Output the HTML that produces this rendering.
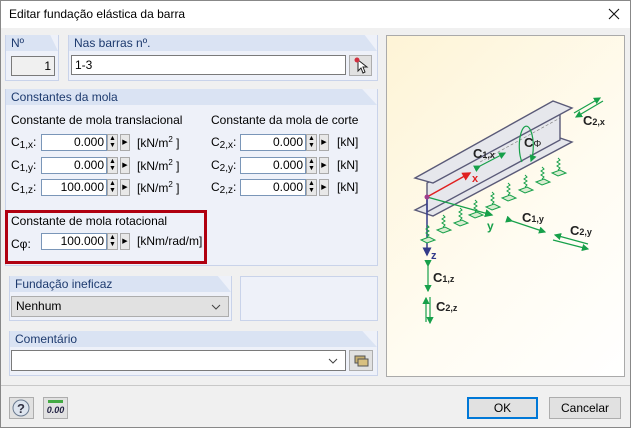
<!DOCTYPE html>
<html><head><meta charset="utf-8"><style>
*{box-sizing:border-box;margin:0;padding:0}
body{width:631px;height:428px;overflow:hidden;background:#f0f0f0;font-family:"Liberation Sans",sans-serif;font-size:12px;color:#000;position:relative}
.a{position:absolute}
.win{left:0;top:0;width:631px;height:428px;border:1px solid #888}
.title{left:1px;top:1px;width:629px;height:27px;background:#fff}
.panel{background:#eef1f9;border:1px solid #c9d3ea;border-top:none}
.hdr{background:#dae3f3;height:16px;color:#1d3a6e;padding-left:5px;line-height:16px;font-size:12px}
.inp{background:#fff;border:1px solid #7a7a7a;height:20px;line-height:18px;text-align:right;padding-right:3px}
.num{border:1px solid #7a96b8;background:#fff;height:17px;line-height:15px;text-align:right;padding-right:2px}
.spin{width:11px;height:17px;border:1px solid #aaa;background:#e8e8e8}
.btn{background:#e1e1e1;border:1px solid #adadad;text-align:center}
sub{font-size:10px;vertical-align:-2px}
sup{font-size:8px}
</style></head><body>
<div class="a win"></div>
<div class="a title"></div>
<div class="a" style="left:9px;top:7px;font-size:12px">Editar fundação elástica da barra</div>
<svg class="a" style="left:608px;top:8px" width="12" height="12"><path d="M1,1 L11,11 M11,1 L1,11" stroke="#111" stroke-width="1.1"/></svg>

<div class="a panel" style="left:5px;top:35px;width:54px;height:46px"><div class="hdr" style="clip-path:polygon(0 0,85% 0,100% 100%,0 100%)">Nº</div></div>
<div class="a inp" style="left:11px;top:56px;width:44px;background:#f0f0f0">1</div>
<div class="a panel" style="left:68px;top:35px;width:310px;height:46px"><div class="hdr" style="clip-path:polygon(0 0,96% 0,100% 100%,0 100%)">Nas barras nº.</div></div>
<div class="a inp" style="left:71px;top:55px;width:275px;text-align:left;padding-left:3px">1-3</div>
<div class="a btn" style="left:349px;top:55px;width:23px;height:21px"><svg width="21" height="19"><path d="M8,4 L8,15 L11,12 L13,17 L15,16 L13,11 L17,11 Z" fill="#fff" stroke="#222"/><circle cx="7" cy="4" r="2.5" fill="#d03040"/></svg></div>

<div class="a panel" style="left:5px;top:89px;width:373px;height:177px"><div class="hdr" style="clip-path:polygon(0 0,96% 0,100% 100%,0 100%)">Constantes da mola</div></div>
<div class="a" style="left:11px;top:113px">Constante de mola translacional</div>
<div class="a" style="left:211px;top:113px">Constante da mola de corte</div>

<div class="a" style="left:11px;top:135px">C<sub>1,x</sub>:</div>
<div class="a num" style="left:41px;top:134px;width:66px">0.000</div>
<div class="a spin" style="left:107px;top:134px;font-size:7px;line-height:7px;text-align:center">▲<br>▼</div>
<div class="a spin" style="left:120px;top:134px;width:10px;font-size:7px;line-height:15px;text-align:center">▶</div>
<div class="a" style="left:137px;top:135px">[kN/m<sup>2</sup> ]</div>
<div class="a" style="left:11px;top:158px">C<sub>1,y</sub>:</div>
<div class="a num" style="left:41px;top:157px;width:66px">0.000</div>
<div class="a spin" style="left:107px;top:157px;font-size:7px;line-height:7px;text-align:center">▲<br>▼</div>
<div class="a spin" style="left:120px;top:157px;width:10px;font-size:7px;line-height:15px;text-align:center">▶</div>
<div class="a" style="left:137px;top:158px">[kN/m<sup>2</sup> ]</div>
<div class="a" style="left:11px;top:180px">C<sub>1,z</sub>:</div>
<div class="a num" style="left:41px;top:179px;width:66px">100.000</div>
<div class="a spin" style="left:107px;top:179px;font-size:7px;line-height:7px;text-align:center">▲<br>▼</div>
<div class="a spin" style="left:120px;top:179px;width:10px;font-size:7px;line-height:15px;text-align:center">▶</div>
<div class="a" style="left:137px;top:180px">[kN/m<sup>2</sup> ]</div>

<div class="a" style="left:211px;top:135px">C<sub>2,x</sub>:</div>
<div class="a num" style="left:240px;top:134px;width:66px">0.000</div>
<div class="a spin" style="left:306px;top:134px;font-size:7px;line-height:7px;text-align:center">▲<br>▼</div>
<div class="a spin" style="left:319px;top:134px;width:10px;font-size:7px;line-height:15px;text-align:center">▶</div>
<div class="a" style="left:337px;top:135px">[kN]</div>
<div class="a" style="left:211px;top:158px">C<sub>2,y</sub>:</div>
<div class="a num" style="left:240px;top:157px;width:66px">0.000</div>
<div class="a spin" style="left:306px;top:157px;font-size:7px;line-height:7px;text-align:center">▲<br>▼</div>
<div class="a spin" style="left:319px;top:157px;width:10px;font-size:7px;line-height:15px;text-align:center">▶</div>
<div class="a" style="left:337px;top:158px">[kN]</div>
<div class="a" style="left:211px;top:180px">C<sub>2,z</sub>:</div>
<div class="a num" style="left:240px;top:179px;width:66px">0.000</div>
<div class="a spin" style="left:306px;top:179px;font-size:7px;line-height:7px;text-align:center">▲<br>▼</div>
<div class="a spin" style="left:319px;top:179px;width:10px;font-size:7px;line-height:15px;text-align:center">▶</div>
<div class="a" style="left:337px;top:180px">[kN]</div>

<div class="a" style="left:5px;top:210px;width:202px;height:54px;border:3px solid #b00010;background:#eef1f9"></div>
<div class="a" style="left:11px;top:214px">Constante de mola rotacional</div>
<div class="a" style="left:11px;top:237px">Cφ:</div>
<div class="a num" style="left:41px;top:233px;width:66px">100.000</div>
<div class="a spin" style="left:107px;top:233px;font-size:7px;line-height:7px;text-align:center">▲<br>▼</div>
<div class="a spin" style="left:120px;top:233px;width:10px;font-size:7px;line-height:15px;text-align:center">▶</div>
<div class="a" style="left:137px;top:234px">[kNm/rad/m]</div>

<div class="a panel" style="left:9px;top:276px;width:223px;height:45px"><div class="hdr" style="clip-path:polygon(0 0,94% 0,100% 100%,0 100%)">Fundação ineficaz</div></div>
<div class="a" style="left:11px;top:296px;width:218px;height:21px;border:1px solid #adadad;background:#e1e1e1;padding-left:4px;line-height:19px">Nenhum<svg style="position:absolute;right:7px;top:7px" width="10" height="6"><path d="M1,1 L5,5 L9,1" stroke="#444" fill="none"/></svg></div>
<div class="a" style="left:240px;top:276px;width:138px;height:45px;border:1px solid #c9d3ea;background:#eef1f9"></div>

<div class="a panel" style="left:9px;top:331px;width:369px;height:45px"><div class="hdr" style="clip-path:polygon(0 0,96% 0,100% 100%,0 100%)">Comentário</div></div>
<div class="a" style="left:11px;top:350px;width:335px;height:21px;border:1px solid #7a7a7a;background:#fff"><svg style="position:absolute;right:7px;top:7px" width="10" height="6"><path d="M1,1 L5,5 L9,1" stroke="#444" fill="none"/></svg></div>
<div class="a btn" style="left:349px;top:350px;width:24px;height:21px"><svg width="22" height="19"><rect x="5" y="5" width="10" height="7" fill="#c8b070" stroke="#555"/><rect x="8" y="8" width="10" height="7" fill="#d8c080" stroke="#555"/></svg></div>

<div class="a" style="left:386px;top:35px;width:239px;height:342px;border:1px solid #aaa;background:linear-gradient(135deg,#fef4d6,#fffcf2 60%,#fff)">
<svg width="239" height="342" viewBox="386 35 239 342" style="position:absolute;left:-1px;top:-1px">
<defs><marker id="g" markerWidth="6" markerHeight="6" refX="5" refY="3" orient="auto"><path d="M0,0 L6,3 L0,6 Z" fill="#17a04a"/></marker>
<marker id="r" markerWidth="6" markerHeight="6" refX="5" refY="3" orient="auto"><path d="M0,0 L6,3 L0,6 Z" fill="#e02020"/></marker>
<marker id="b" markerWidth="6" markerHeight="6" refX="5" refY="3" orient="auto"><path d="M0,0 L6,3 L0,6 Z" fill="#333a8a"/></marker></defs>
<g stroke="#5a5a78" stroke-width="1.4" fill="#e6e7ec">
<polygon points="415,210 557,137 572,142 433,216"/>
<polygon points="427,183 427,212 560,140 560,112"/>
<polygon points="415,178 553,101 572,108 433,183"/>
</g>
<line x1="480" y1="162" x2="560" y2="118" stroke="#777" stroke-width="0.6" stroke-dasharray="3,2"/>
<line x1="427" y1="197" x2="470" y2="173" stroke="#e02020" stroke-width="1.5" marker-end="url(#r)"/>
<text x="472" y="182" fill="#e02020" font-size="11" font-weight="bold">x</text>
<line x1="427" y1="197" x2="492" y2="215" stroke="#17a04a" stroke-width="1.4" marker-end="url(#g)"/>
<text x="487" y="230" fill="#17a04a" font-size="12" font-weight="bold">y</text>
<line x1="427" y1="197" x2="427" y2="255" stroke="#333a8a" stroke-width="1.5" marker-end="url(#b)"/>
<text x="431" y="259" fill="#333a8a" font-size="11" font-weight="bold">z</text>
<circle cx="427" cy="197" r="2.5" fill="#a03c8c"/>
<g stroke="#17a04a" stroke-width="1.2" fill="none">
<path d="M522,162 A7,20 0 1 1 531,161" marker-end="url(#g)"/>
<line x1="480" y1="166" x2="505" y2="153" marker-end="url(#g)" marker-start="url(#g)"/>
<line x1="574" y1="113" x2="600" y2="98" marker-end="url(#g)"/>
<line x1="603" y1="101" x2="576" y2="117" marker-end="url(#g)"/>
<line x1="512" y1="221" x2="545" y2="232" marker-end="url(#g)" marker-start="url(#g)"/>
<line x1="588" y1="244" x2="555" y2="235" marker-end="url(#g)"/>
<line x1="553" y1="240" x2="588" y2="249" marker-end="url(#g)"/>
<line x1="428" y1="266" x2="428" y2="291" marker-end="url(#g)" marker-start="url(#g)"/>
<line x1="426" y1="322" x2="426" y2="298" marker-end="url(#g)"/>
<line x1="430" y1="297" x2="430" y2="323" marker-end="url(#g)"/>
</g>
<g stroke="#17a04a" stroke-width="1" fill="#d9ecd0">
<g transform="translate(443,215)"><path d="M0,0 l2,2 l-3,2 l3,2 l-3,2 l3,2 l-2,2" fill="none"/><polygon points="-6,15 2,12 8,15 0,18"/></g>
<g transform="translate(460,208)"><path d="M0,0 l2,2 l-3,2 l3,2 l-3,2 l3,2 l-2,2" fill="none"/><polygon points="-6,15 2,12 8,15 0,18"/></g>
<g transform="translate(475,200)"><path d="M0,0 l2,2 l-3,2 l3,2 l-3,2 l3,2 l-2,2" fill="none"/><polygon points="-6,15 2,12 8,15 0,18"/></g>
<g transform="translate(492,192)"><path d="M0,0 l2,2 l-3,2 l3,2 l-3,2 l3,2 l-2,2" fill="none"/><polygon points="-6,15 2,12 8,15 0,18"/></g>
<g transform="translate(508,183)"><path d="M0,0 l2,2 l-3,2 l3,2 l-3,2 l3,2 l-2,2" fill="none"/><polygon points="-6,15 2,12 8,15 0,18"/></g>
<g transform="translate(525,175)"><path d="M0,0 l2,2 l-3,2 l3,2 l-3,2 l3,2 l-2,2" fill="none"/><polygon points="-6,15 2,12 8,15 0,18"/></g>
<g transform="translate(542,167)"><path d="M0,0 l2,2 l-3,2 l3,2 l-3,2 l3,2 l-2,2" fill="none"/><polygon points="-6,15 2,12 8,15 0,18"/></g>
<g transform="translate(558,158)"><path d="M0,0 l2,2 l-3,2 l3,2 l-3,2 l3,2 l-2,2" fill="none"/><polygon points="-6,15 2,12 8,15 0,18"/></g>
<g transform="translate(427,225)"><path d="M0,0 l2,2 l-3,2 l3,2 l-3,2 l3,2 l-2,2" fill="none"/><polygon points="-6,15 2,12 8,15 0,18"/></g>
</g>
<g fill="#222" font-size="13" font-weight="bold">
<text x="473" y="158">C<tspan font-size="9">1,x</tspan></text>
<text x="524" y="147">C<tspan font-size="10" font-weight="normal">Φ</tspan></text>
<text x="583" y="125">C<tspan font-size="9">2,x</tspan></text>
<text x="522" y="222">C<tspan font-size="9">1,y</tspan></text>
<text x="570" y="235">C<tspan font-size="9">2,y</tspan></text>
<text x="433" y="282">C<tspan font-size="9">1,z</tspan></text>
<text x="436" y="311">C<tspan font-size="9">2,z</tspan></text>
</g>
</svg></div>

<div class="a" style="left:1px;top:385px;width:629px;height:1px;background:#c8c8c8"></div>
<div class="a btn" style="left:9px;top:397px;width:25px;height:22px"><svg width="23" height="20"><circle cx="11" cy="10" r="8" fill="#dde4ee" stroke="#6a7a90"/><text x="7" y="15" font-size="13" font-weight="bold" fill="#334" font-family="Liberation Sans">?</text></svg></div>
<div class="a btn" style="left:43px;top:397px;width:25px;height:22px;font-size:9px;font-style:italic;font-weight:bold;line-height:24px;color:#224"><div style="position:absolute;left:4px;top:2px;width:15px;height:3px;background:#4a4"></div>0.00</div>
<div class="a btn" style="left:467px;top:397px;width:71px;height:22px;border:2px solid #0078d7;line-height:18px">OK</div>
<div class="a btn" style="left:549px;top:397px;width:72px;height:22px;line-height:20px">Cancelar</div>
</body></html>
